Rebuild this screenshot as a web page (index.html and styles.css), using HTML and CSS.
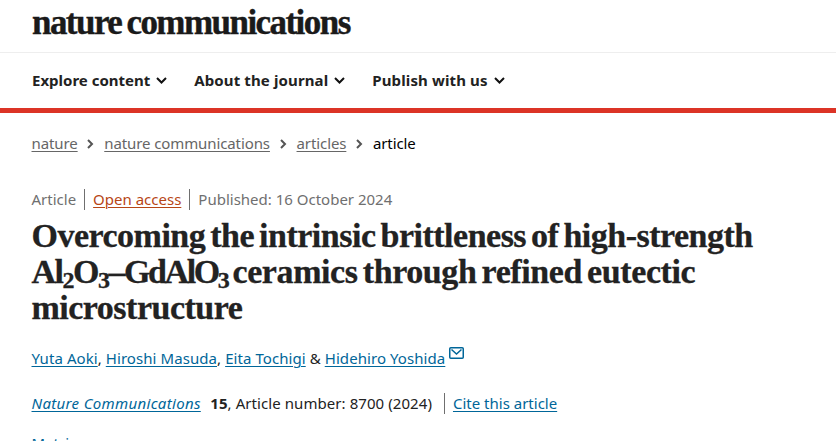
FILE: index.html
```html
<!DOCTYPE html>
<html lang="en">
<head>
    <meta charset="UTF-8">
    <meta name="viewport" content="width=device-width, initial-scale=1.0">
    <title>Overcoming the intrinsic brittleness of high-strength ceramics | Nature Communications</title>
    <link rel="stylesheet" href="styles.css">
</head>
<body>
    <header class="header">
        <div class="logo-row">
            <a class="logo" href="#">nature communications</a>
        </div>
        <nav class="menu">
            <a class="menu-link" href="#"><span>Explore content</span>
                <svg class="chevron" viewBox="0 0 11 7"><path d="M1 1l4.5 4.5L10 1"/></svg></a>
            <a class="menu-link wide" href="#"><span>About the journal</span>
                <svg class="chevron" viewBox="0 0 11 7"><path d="M1 1l4.5 4.5L10 1"/></svg></a>
            <a class="menu-link wide" href="#"><span>Publish with us</span>
                <svg class="chevron" viewBox="0 0 11 7"><path d="M1 1l4.5 4.5L10 1"/></svg></a>
        </nav>
    </header>

    <main class="page">
        <nav class="breadcrumbs">
            <a href="#">nature</a>
            <svg class="arrow" viewBox="0 0 7 10"><path d="M1 1l4 4-4 4"/></svg>
            <a href="#">nature communications</a>
            <svg class="arrow" viewBox="0 0 7 10"><path d="M1 1l4 4-4 4"/></svg>
            <a href="#">articles</a>
            <svg class="arrow" viewBox="0 0 7 10"><path d="M1 1l4 4-4 4"/></svg>
            <span class="current">article</span>
        </nav>

        <ul class="identifiers">
            <li>Article</li>
            <li><a class="open-access" href="#">Open access</a></li>
            <li>Published: 16 October 2024</li>
        </ul>

        <h1 class="title">
            <span class="line">Overcoming the intrinsic brittleness of high-strength</span>
            <span class="line line-formula"><span class="formula">Al<sub>2</sub>O<sub>3</sub>–<span class="tight">GdAlO<sub>3</sub></span></span> ceramics through refined eutectic</span>
            <span class="line">microstructure</span>
        </h1>

        <p class="authors"><a href="#">Yuta Aoki</a>, <a href="#">Hiroshi Masuda</a>, <a href="#">Eita Tochigi</a> &amp; <a href="#">Hidehiro Yoshida</a><svg class="mail" viewBox="0 0 15 12"><rect x=".75" y=".75" width="13.5" height="10.5" rx="1"/><path d="M2.5 2.5l5 4.5 5-4.5"/></svg></p>

        <p class="info"><a class="journal" href="#">Nature Communications</a><span class="volume"><b>15</b>, Article number: 8700 (2024)</span><span class="cite"><a href="#">Cite this article</a></span></p>

        <p class="metrics"><a href="#">Metrics</a></p>
    </main>
</body>
</html>
```

FILE: styles.css
```css
* {
    box-sizing: border-box;
}
body {
    margin: 0;
    height: 441px;
    overflow: hidden;
    background: #fff;
    color: #222;
    font-family: "Noto Sans", "Open Sans", sans-serif;
    font-size: 15px;
    line-height: 24px;
}
a {
    color: #006699;
    text-underline-offset: 2px;
    text-decoration-thickness: 1px;
}
svg {
    fill: none;
    flex: none;
}
.header {
    border-bottom: 5px solid #dc3426;
}
.logo-row {
    height: 53px;
    padding: 2px 32px 0;
    border-bottom: 1px solid #eee;
}
.logo {
    display: block;
    color: #1a1a1a;
    font-family: "Liberation Serif", serif;
    font-size: 35px;
    font-weight: bold;
    letter-spacing: -1.55px;
    word-spacing: -2px;
    line-height: 41px;
    text-decoration: none;
    white-space: nowrap;
    -webkit-text-stroke: 0.4px #1a1a1a;
}
.menu {
    display: flex;
    gap: 27px;
    height: 55px;
    padding: 0 32px 2px;
    align-items: center;
}
.menu-link {
    display: flex;
    align-items: center;
    gap: 6px;
    color: #222;
    font-weight: bold;
    text-decoration: none;
    white-space: nowrap;
}
.wide {
    letter-spacing: 0.12px;
}
.chevron {
    width: 11px;
    height: 7px;
    margin-top: 2px;
    stroke: #111;
    stroke-width: 2;
}
.page {
    padding: 18px 31.5px 0;
}
.breadcrumbs {
    display: flex;
    align-items: center;
    gap: 9.8px;
    letter-spacing: -0.1px;
}
.breadcrumbs a {
    color: #666;
}
.breadcrumbs .current {
    color: #000;
}
.arrow {
    width: 7px;
    height: 10px;
    margin-top: 1px;
    stroke: #555;
    stroke-width: 2;
}
.identifiers {
    display: flex;
    align-items: center;
    margin: 32px 0 0;
    padding: 0;
    list-style: none;
    color: #6f6f6f;
}
.identifiers li + li {
    margin-left: 8px;
    padding-left: 8px;
    border-left: 1px solid #6f6f6f;
    line-height: 21px;
}
.identifiers .open-access {
    color: #b74616;
}
.title {
    margin: 7px 0 0;
    font-family: "Liberation Serif", serif;
    font-size: 34px;
    font-weight: bold;
    letter-spacing: -0.5px;
    word-spacing: -3px;
    line-height: 36px;
    -webkit-text-stroke: 0.3px #222;
}
.line {
    display: block;
    white-space: nowrap;
}
.line-formula {
    letter-spacing: -0.4px;
}
.formula {
    letter-spacing: -1.5px;
}
.tight {
    letter-spacing: -2.4px;
}
.title sub {
    position: relative;
    bottom: -5px;
    font-size: 24px;
    line-height: 0;
    vertical-align: baseline;
}
.authors {
    margin: 20px 0 0;
    letter-spacing: 0.07px;
    white-space: nowrap;
}
.mail {
    width: 15px;
    height: 12px;
    margin-left: 4px;
    vertical-align: 5px;
    stroke: #006699;
    stroke-width: 1.5;
}
.info {
    display: flex;
    align-items: center;
    margin: 21px 0 0;
    white-space: nowrap;
}
.journal {
    font-style: italic;
    letter-spacing: 0.33px;
}
.volume {
    margin-left: 9.5px;
    letter-spacing: 0.07px;
}
.cite {
    margin-left: 12px;
    padding-left: 8px;
    border-left: 1px solid #6f6f6f;
    line-height: 21px;
}
.metrics {
    margin: 16px 0 0;
}
```
